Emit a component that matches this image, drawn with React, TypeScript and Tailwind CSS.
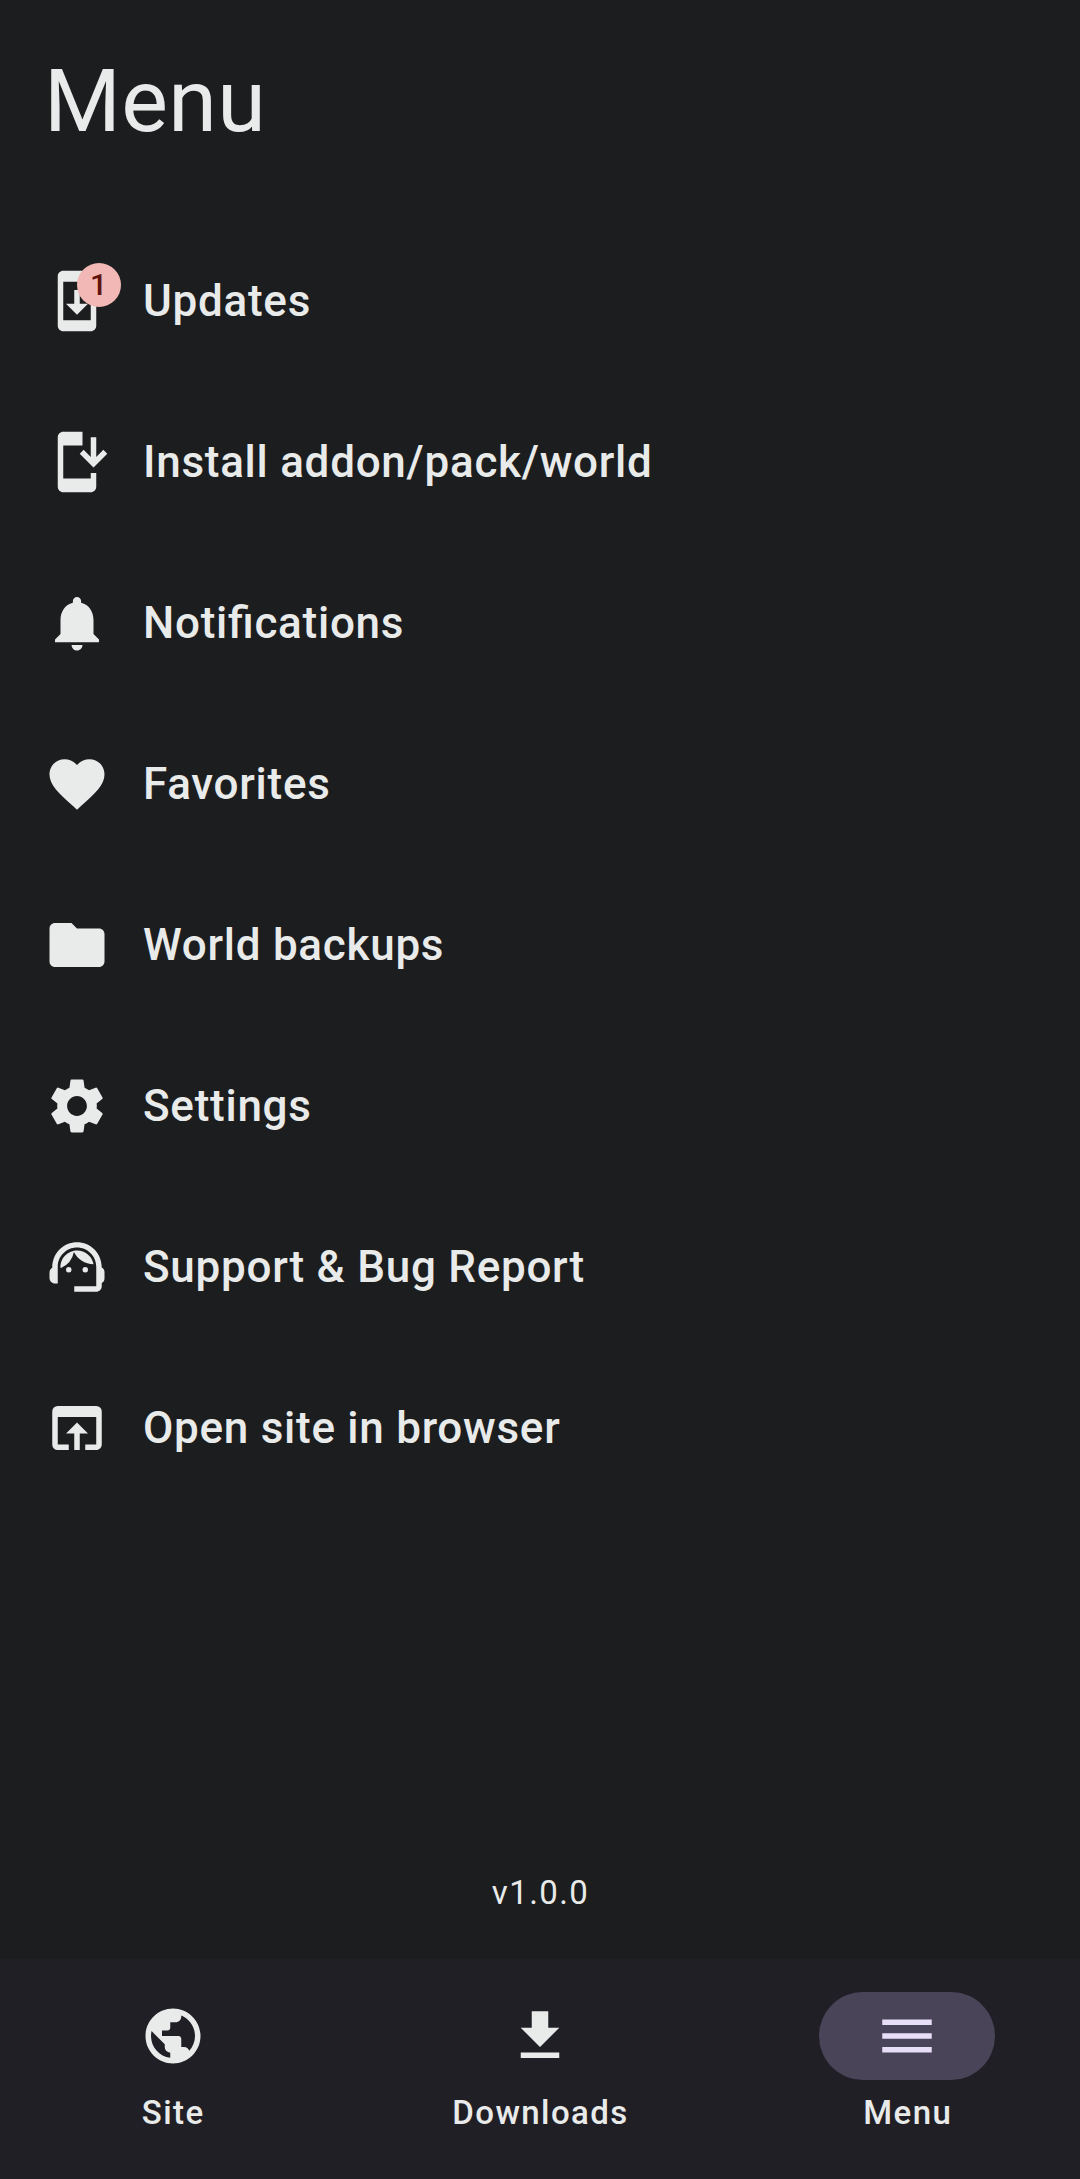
import type { IconType } from 'react-icons';
import {
  MdDownload,
  MdFavorite,
  MdFolder,
  MdInstallMobile,
  MdMenu,
  MdNotifications,
  MdOpenInBrowser,
  MdPublic,
  MdSettings,
  MdSupportAgent,
  MdSystemUpdate,
} from 'react-icons/md';
import { clsx } from 'clsx';

interface MenuEntry {
  label: string;
  icon: IconType;
  badge?: number;
}

interface NavEntry {
  label: string;
  icon: IconType;
}

const menuEntries: MenuEntry[] = [
  { label: 'Updates', icon: MdSystemUpdate, badge: 1 },
  { label: 'Install addon/pack/world', icon: MdInstallMobile },
  { label: 'Notifications', icon: MdNotifications },
  { label: 'Favorites', icon: MdFavorite },
  { label: 'World backups', icon: MdFolder },
  { label: 'Settings', icon: MdSettings },
  { label: 'Support & Bug Report', icon: MdSupportAgent },
  { label: 'Open site in browser', icon: MdOpenInBrowser },
];

const navEntries: NavEntry[] = [
  { label: 'Site', icon: MdPublic },
  { label: 'Downloads', icon: MdDownload },
  { label: 'Menu', icon: MdMenu },
];

const MenuRow = ({ label, icon: Icon, badge }: MenuEntry) => (
  <li>
    <button className="flex w-full items-center gap-[33px] text-left">
      <span className="relative flex-none">
        <Icon className="size-[66px]" />
        {badge !== undefined && (
          <span className="absolute -top-[5px] left-[33px] flex size-11 items-center justify-center rounded-full bg-[#f2b8b5] text-[30.25px] leading-none font-medium tracking-[1px] text-[#601410]">
            {badge}
          </span>
        )}
      </span>
      {/* keep the fi ligature, letter-spacing turns it off by default */}
      <span className="text-[44px] leading-[66px] font-medium tracking-[0.73px] [font-feature-settings:'liga']">
        {label}
      </span>
    </button>
  </li>
);

const BottomNav = ({ active }: { active: string }) => (
  <nav className="flex h-[220px] flex-none gap-[22px] bg-[#211f26] pt-[33px]">
    {navEntries.map(({ label, icon: Icon }) => (
      <button key={label} className="flex flex-1 basis-0 flex-col items-center gap-[11px]">
        <span
          className={clsx(
            'flex h-[88px] w-44 items-center justify-center rounded-full',
            label === active && 'bg-[#4a4458] text-[#e8def8]'
          )}
        >
          <Icon className="size-[66px]" />
        </span>
        <span className="pl-px text-[33px] leading-[44px] font-medium tracking-[1.42px]">{label}</span>
      </button>
    ))}
  </nav>
);

export default function App() {
  return (
    <div className="flex h-[2179px] w-[1080px] flex-col overflow-hidden bg-[#1c1d1f] font-['Roboto',sans-serif] text-[#e9ebea]">
      <main className="flex flex-1 flex-col px-11 pt-[46px] pb-11">
        <h1 className="text-[88px] leading-[110px] tracking-[0.4px]">Menu</h1>
        <ul className="mt-28 flex flex-col gap-[95px]">
          {menuEntries.map((entry) => (
            <MenuRow key={entry.label} {...entry} />
          ))}
        </ul>
        <p className="mt-auto pl-px text-center text-[33px] leading-[44px] tracking-[1.375px]">v1.0.0</p>
      </main>
      <BottomNav active="Menu" />
    </div>
  );
}
